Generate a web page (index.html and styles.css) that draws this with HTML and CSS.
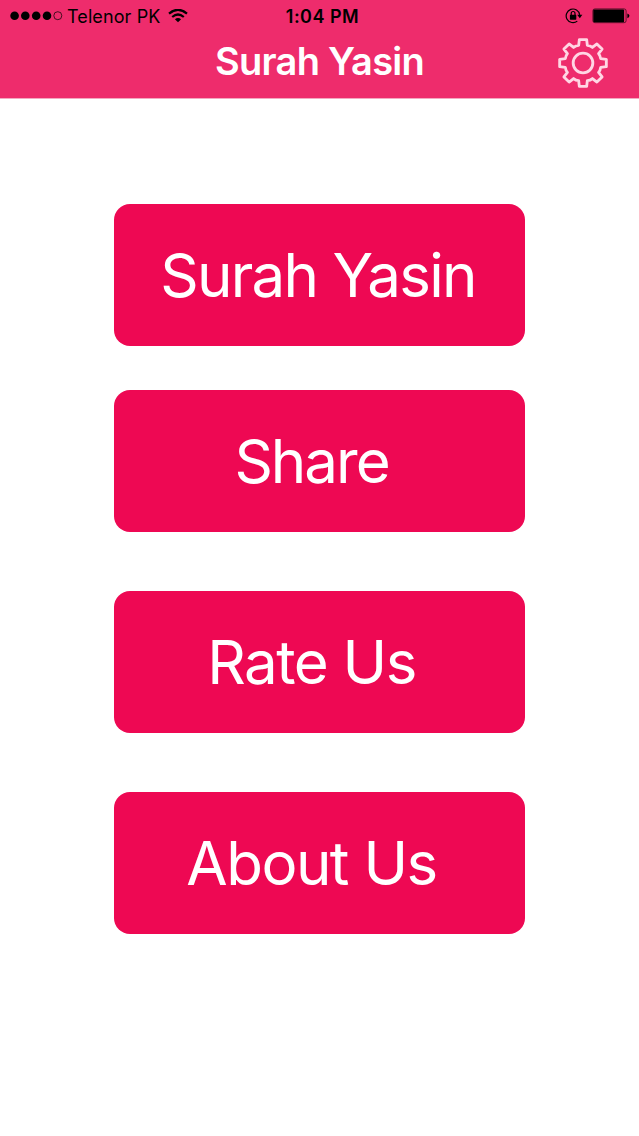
FILE: index.html
```html
<!DOCTYPE html>
<html lang="en">
<head>
    <meta charset="UTF-8">
    <meta name="viewport" content="width=device-width, initial-scale=1.0">
    <title>Surah Yasin</title>
    <link rel="stylesheet" href="styles.css">
</head>
<body>
    <header class="header">
        <div class="status-bar">
            <div class="status-left">
                <svg class="signal" width="53" height="10" viewBox="0 0 53 10">
                    <circle cx="4.6" cy="4.7" r="4.3"/>
                    <circle cx="15.3" cy="4.7" r="4.3"/>
                    <circle cx="26.2" cy="4.7" r="4.3"/>
                    <circle cx="37" cy="4.7" r="4.3"/>
                    <circle cx="47.8" cy="4.7" r="4" fill="none" stroke="#000" stroke-width="0.7"/>
                </svg>
                <span class="carrier">Telenor PK</span>
                <svg class="wifi" width="20" height="14" viewBox="0 0 20 14">
                    <path d="M1 4.6 Q10 -3 19 4.6" fill="none" stroke="#000" stroke-width="2.2"/>
                    <path d="M4.2 8 Q10 3 15.8 8" fill="none" stroke="#000" stroke-width="2.2"/>
                    <path d="M6.9 10.3 Q10 7.8 13.1 10.3 L10 13.2 Z"/>
                </svg>
            </div>
            <span class="time">1:04 PM</span>
            <div class="status-right">
                <svg width="18" height="16" viewBox="0 0 18 16">
                    <path d="M12.3 13.1 A6.8 6.8 0 1 1 14.7 6.8" fill="none" stroke="#000" stroke-width="1.2"/>
                    <path d="M12.2 6.8 H17.4 L14.8 10.2 Z"/>
                    <rect x="4.9" y="6.8" width="6.4" height="4.9" rx="0.6"/>
                    <path d="M6.2 7.2 V5.4 A1.9 1.9 0 0 1 10 5.4 V7.2" fill="none" stroke="#000" stroke-width="1.2"/>
                </svg>
                <svg width="38" height="16" viewBox="0 0 38 16">
                    <rect x="0.9" y="0.9" width="33.2" height="13.8" rx="2" fill="none" stroke="#000" stroke-width="0.6"/>
                    <rect x="1.3" y="1.4" width="30.8" height="12.8" rx="1"/>
                    <path d="M35.4 5.4 Q37.4 6 37.4 7.8 Q37.4 9.6 35.4 10.2 Z"/>
                </svg>
            </div>
        </div>
        <div class="nav-bar">
            <h1 class="title">Surah Yasin</h1>
            <svg class="settings" width="50" height="50" viewBox="-75 -75 150 150">
                <path d="M-13 -53 L-11 -70 H11 L13 -53 Q22 -52 28.3 -46.7 L41.7 -57.3 L57.3 -41.7 L46.7 -28.3 Q52 -22 53 -13 L70 -11 V11 L53 13 Q52 22 46.7 28.3 L57.3 41.7 L41.7 57.3 L28.3 46.7 Q22 52 13 53 L11 70 H-11 L-13 53 Q-22 52 -28.3 46.7 L-41.7 57.3 L-57.3 41.7 L-46.7 28.3 Q-52 22 -53 13 L-70 11 V-11 L-53 -13 Q-52 -22 -46.7 -28.3 L-57.3 -41.7 L-41.7 -57.3 L-28.3 -46.7 Q-22 -52 -13 -53 Z"/>
                <circle r="29.5"/>
            </svg>
        </div>
    </header>
    <main class="menu">
        <button class="menu-button first">Surah Yasin</button>
        <button class="menu-button share">Share</button>
        <button class="menu-button">Rate Us</button>
        <button class="menu-button">About Us</button>
    </main>
</body>
</html>
```

FILE: styles.css
```css
body {
    margin: 0;
    height: 1136px;
    background-color: #fff;
    font-family: Inter, "Liberation Sans", sans-serif;
    overflow: hidden;
}

.header {
    height: 98px;
    background-color: #ee2c6c;
    border-bottom: 1px solid #f3a9c0;
}

.status-bar {
    display: grid;
    grid-template-columns: 1fr auto 1fr;
    align-items: center;
    height: 32px;
    padding: 0 9px 0 10px;
    color: #000;
}

.status-left,
.status-right {
    display: flex;
    align-items: center;
}

.status-right {
    justify-content: flex-end;
    gap: 9px;
}

.carrier {
    margin-left: 4px;
    padding-top: 2px;
    font-size: 18px;
    line-height: 30px;
    letter-spacing: 0.1px;
    white-space: nowrap;
}

.wifi {
    margin-left: 8px;
}

.time {
    margin-left: 5px;
    padding-top: 2px;
    font-size: 18px;
    font-weight: 600;
    line-height: 30px;
    letter-spacing: 0.5px;
}

.nav-bar {
    display: grid;
    grid-template-columns: 1fr auto 1fr;
    height: 66px;
}

.title {
    grid-column: 2;
    margin: 0;
    font-size: 38px;
    font-weight: 600;
    line-height: 58px;
    letter-spacing: -0.7px;
    color: #fff;
}

.settings {
    justify-self: end;
    margin: 6px 31px 0 0;
    fill: none;
    stroke: #ffd6e4;
    stroke-width: 8.5;
    stroke-linejoin: round;
}

.menu {
    display: flex;
    flex-direction: column;
    align-items: center;
    gap: 58.7px;
    padding-top: 104.7px;
}

.menu-button {
    width: 410.5px;
    height: 142px;
    padding: 0 16px 0 0;
    border: none;
    border-radius: 16px;
    background-color: #ee0853;
    color: #fff;
    font-family: inherit;
    font-size: 60px;
    letter-spacing: -1.5px;
    cursor: pointer;
}

.first {
    padding: 0 3px 0 0;
    margin-bottom: -14px;
    letter-spacing: -1.7px;
}

.share {
    letter-spacing: -2px;
}
```
